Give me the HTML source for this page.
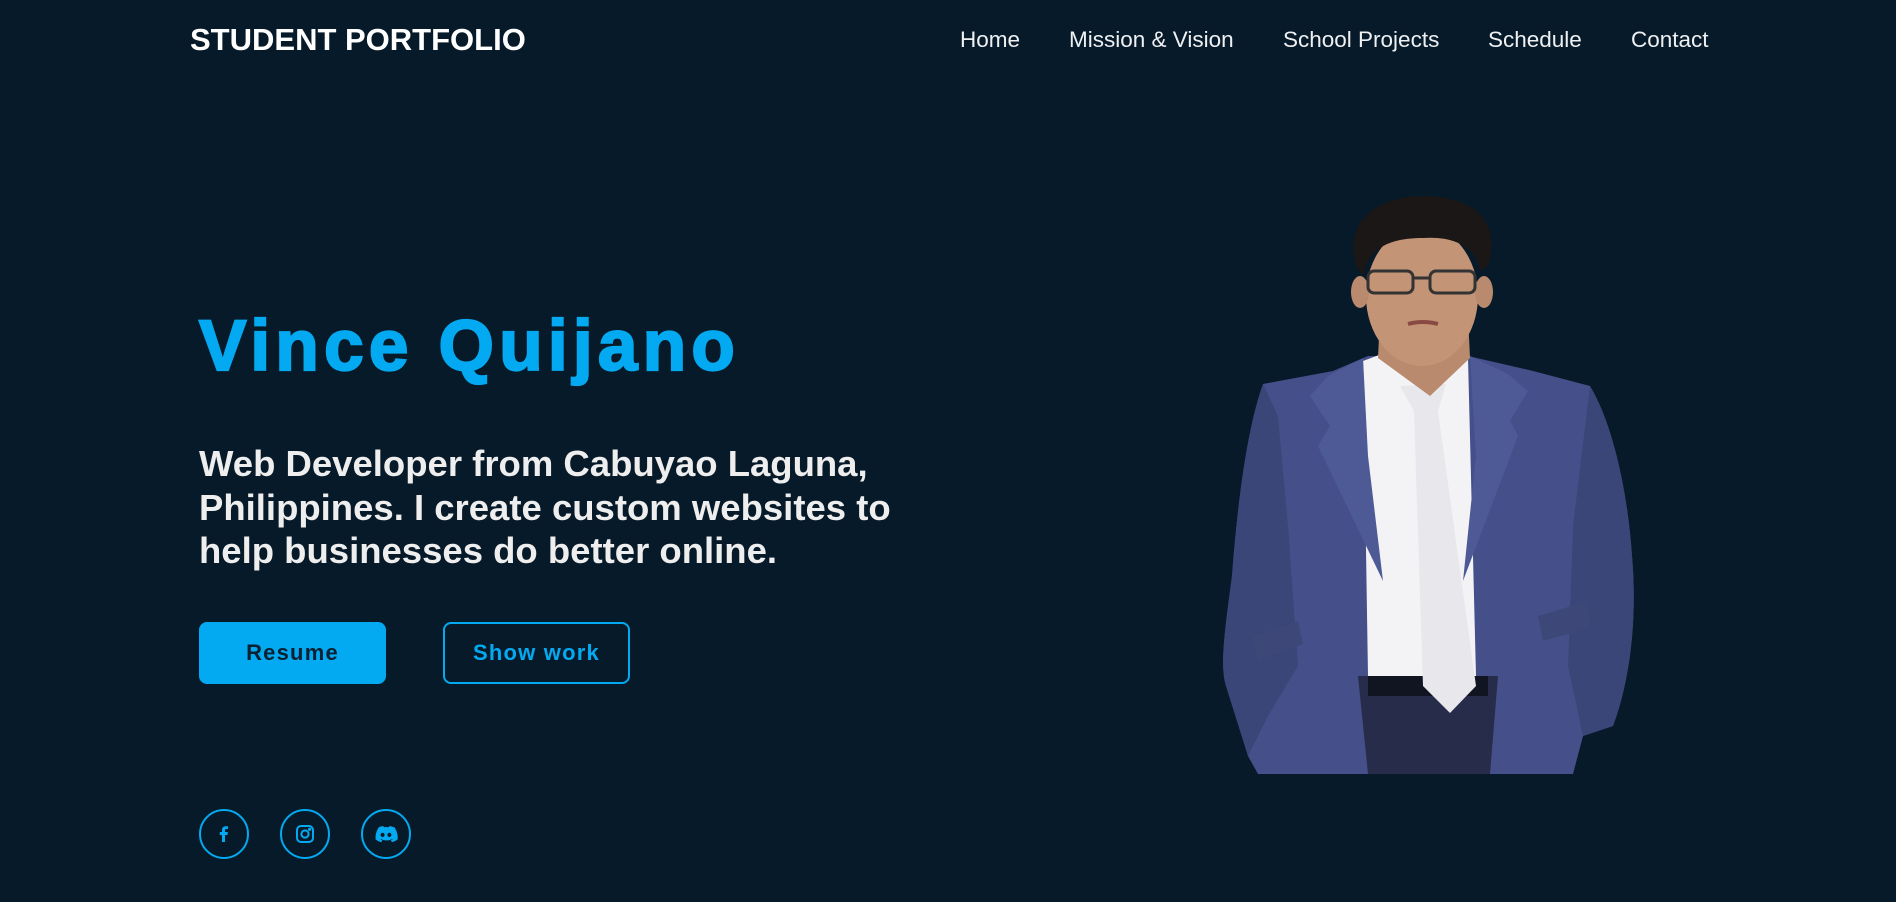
<!DOCTYPE html>
<html><head><meta charset="utf-8"><style>
html,body{margin:0;padding:0}
body{width:1896px;height:902px;background:#071a29;position:relative;overflow:hidden;font-family:"Liberation Sans",Arial,sans-serif}
.logo{position:absolute;left:190px;top:22px;font-size:31px;font-weight:bold;color:#fff;line-height:36px}
.nav a{position:absolute;top:27px;font-size:22.5px;color:#eef0f2;text-decoration:none;line-height:26px}
h1{position:absolute;left:199px;top:311px;margin:0;font-size:71px;line-height:1;font-weight:bold;color:#03a9f1;letter-spacing:5.3px;white-space:nowrap;-webkit-text-stroke:2.2px #03a9f1}
p.d{position:absolute;left:199px;top:442px;margin:0;width:735px;font-size:36.5px;line-height:43.5px;font-weight:bold;color:#eeeeee}
.btn{position:absolute;top:622px;width:187px;height:62px;box-sizing:border-box;border-radius:8px;font-size:22px;font-weight:bold;letter-spacing:1.2px;display:flex;align-items:center;justify-content:center}
.b1{left:199px;background:#03a9f1;color:#0b2030}
.b2{left:443px;border:2px solid #03a9f1;color:#03a9f1}
.s{position:absolute;top:809px;width:50px;height:50px;box-sizing:border-box;border:2px solid #03a9f1;border-radius:50%;display:flex;align-items:center;justify-content:center}
</style></head><body>
<div class="logo">STUDENT PORTFOLIO</div>
<div class="nav">
<a style="left:960px">Home</a>
<a style="left:1069px">Mission &amp; Vision</a>
<a style="left:1283px">School Projects</a>
<a style="left:1488px">Schedule</a>
<a style="left:1631px">Contact</a>
</div>
<h1>Vince Quijano</h1>
<p class="d">Web Developer from Cabuyao Laguna, Philippines. I create custom websites to help businesses do better online.</p>
<div class="btn b1">Resume</div>
<div class="btn b2">Show work</div>
<div class="s" style="left:199px"><svg width="20" height="20" viewBox="0 0 20 20"><path d="M11 18V11h2.5l.4-3H11V6.3c0-.8.3-1.3 1.4-1.3H14V2.3c-.3 0-1.2-.1-2.2-.1C9.6 2.2 8 3.5 8 6v2H5.8v3H8v7z" fill="#03a9f1"/></svg></div>
<div class="s" style="left:280px"><svg width="20" height="20" viewBox="0 0 20 20" fill="none" stroke="#03a9f1" stroke-width="2"><rect x="2" y="2" width="16" height="16" rx="4"/><circle cx="10" cy="10" r="3.6"/><circle cx="14.6" cy="5.4" r=".6" fill="#03a9f1"/></svg></div>
<div class="s" style="left:361px"><svg width="24" height="20" viewBox="0 0 24 20"><path d="M20 3.2A18 18 0 0 0 15.5 2l-.6 1.2a16 16 0 0 0-5 0L9.4 2A18 18 0 0 0 4.8 3.2C2 7.4 1.2 11.5 1.6 15.5a18 18 0 0 0 5.6 2.8l1.2-1.9-1.9-.9.5-.4c3.6 1.7 7.6 1.7 11.2 0l.5.4-1.9.9 1.2 1.9a18 18 0 0 0 5.6-2.8c.5-4.7-.8-8.7-3.2-12.3zM8.6 13.1c-1.1 0-2-1-2-2.2s.9-2.2 2-2.2 2 1 2 2.2-.9 2.2-2 2.2zm6.8 0c-1.1 0-2-1-2-2.2s.9-2.2 2-2.2 2 1 2 2.2-.9 2.2-2 2.2z" fill="#03a9f1"/></svg></div>

<svg style="position:absolute;left:1218px;top:196px" width="424" height="578" viewBox="0 0 424 578">
<path d="M110 470 L310 470 L300 578 L120 578Z" fill="#262c4a"/>
<path d="M150 470 L270 470 L270 500 L150 500Z" fill="#111522"/>
<path d="M150 160 L115 175 L45 188 C30 230 20 300 14 380 C6 440 2 470 8 490 L30 560 L40 578 L150 578 L140 480 L280 480 L272 578 L355 578 L365 540 L395 530 C410 490 420 430 414 360 C410 300 396 230 372 190 L315 175 L250 160 Z" fill="#45508a"/>
<path d="M45 188 C30 230 20 300 14 380 C6 440 2 470 8 490 L30 560 L50 520 L80 470 L70 330 L60 220Z" fill="#3a4578"/>
<path d="M372 190 C396 230 410 300 414 360 C420 430 410 490 395 530 L365 540 L350 470 L355 330Z" fill="#3a4578"/>
<path d="M35 440 L80 425 L85 448 L40 465Z" fill="#3d4879"/>
<path d="M320 420 L370 405 L372 432 L325 445Z" fill="#3d4879"/>
<path d="M145 165 L185 150 L230 150 L250 162 L258 480 L150 480 Z" fill="#f3f3f5"/>
<path d="M145 162 L110 180 L92 200 L112 230 L100 250 L165 385 L150 260 Z" fill="#4d5a95"/>
<path d="M252 160 L290 178 L310 195 L292 225 L300 240 L245 385 L258 260 Z" fill="#4d5a95"/>
<path d="M182 190 L228 188 L220 215 L258 490 L232 517 L205 490 L196 215 Z" fill="#e8e8ec"/>
<path d="M162 120 L250 120 L252 162 L212 200 L160 162 Z" fill="#b98a6e"/>
<ellipse cx="204" cy="100" rx="56" ry="70" fill="#c49476"/>
<ellipse cx="142" cy="96" rx="9" ry="16" fill="#b98a6e"/>
<ellipse cx="266" cy="96" rx="9" ry="16" fill="#b98a6e"/>
<path d="M138 70 C125 25 160 0 205 0 C250 0 285 20 270 70 L262 75 C258 50 235 40 205 42 C175 42 150 50 145 80 Z" fill="#1a1716"/>
<rect x="150" y="75" width="45" height="22" rx="6" fill="none" stroke="#333" stroke-width="3"/>
<rect x="212" y="75" width="45" height="22" rx="6" fill="none" stroke="#333" stroke-width="3"/>
<line x1="195" y1="82" x2="212" y2="82" stroke="#333" stroke-width="3"/>
<path d="M190 128 Q205 124 220 128" stroke="#8a4a44" stroke-width="4" fill="none"/>
</svg>
</body></html>
